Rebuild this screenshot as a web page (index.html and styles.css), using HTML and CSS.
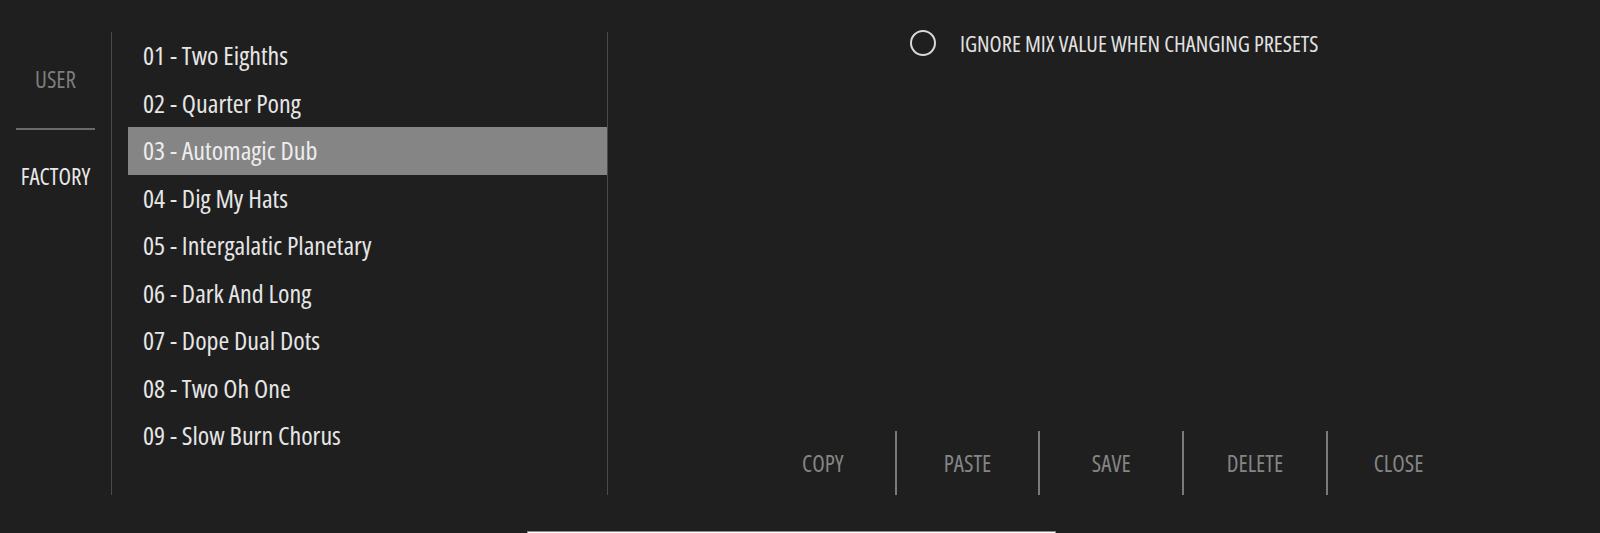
FILE: index.html
```html
<!DOCTYPE html>
<html>
<head>
<meta charset="utf-8">
<link rel="stylesheet" href="styles.css">
</head>
<body>
<div class="app">
  <nav class="sidebar">
    <div class="tab tab-user">USER</div>
    <div class="tab-sep"></div>
    <div class="tab tab-factory">FACTORY</div>
  </nav>
  <ul class="presets">
    <li class="preset">01 - Two Eighths</li>
    <li class="preset">02 - Quarter Pong</li>
    <li class="preset selected">03 - Automagic Dub</li>
    <li class="preset">04 - Dig My Hats</li>
    <li class="preset">05 - Intergalatic Planetary</li>
    <li class="preset">06 - Dark And Long</li>
    <li class="preset">07 - Dope Dual Dots</li>
    <li class="preset">08 - Two Oh One</li>
    <li class="preset">09 - Slow Burn Chorus</li>
  </ul>
  <section class="panel">
    <label class="option">
      <span class="radio"></span>
      <span class="option-text">IGNORE MIX VALUE WHEN CHANGING PRESETS</span>
    </label>
    <div class="actions">
      <div class="action">COPY</div>
      <div class="action">PASTE</div>
      <div class="action">SAVE</div>
      <div class="action">DELETE</div>
      <div class="action">CLOSE</div>
    </div>
  </section>
</div>
<div class="peek"></div>
</body>
</html>
```
FILE: styles.css
```css
html, body {
  margin: 0;
  padding: 0;
  background: #1f1f1f;
  height: 533px;
  overflow: hidden;
}
body {
  font-family: "Open Sans", "Liberation Sans", sans-serif;
  font-stretch: 75%;
  font-weight: 500;
  color: #e4e4e4;
  position: relative;
}
.app {
  display: flex;
  padding-top: 32px;
  height: 463px;
}
.sidebar {
  width: 111px;
  flex: none;
  border-right: 1px solid #4a4a4a;
  display: flex;
  flex-direction: column;
  align-items: center;
}
.tab {
  font-size: 23px;
  line-height: 32px;
  text-align: center;
}
.tab-user {
  color: #7d7d7d;
  margin-top: 31px;
}
.tab-sep {
  width: 79px;
  height: 2px;
  background: #6a6a6a;
  margin-top: 33px;
  align-self: flex-start;
  margin-left: 16px;
}
.tab-factory {
  color: #e8e8e8;
  margin-top: 30px;
}
.presets {
  list-style: none;
  margin: 0;
  padding: 0 0 0 16px;
  width: 479px;
  flex: none;
  border-right: 1px solid #4a4a4a;
}
.preset {
  height: 47.5px;
  line-height: 47.5px;
  padding-left: 15px;
  font-size: 26px;
  white-space: nowrap;
  color: #e6e6e6;
}
.preset.selected {
  background: #858585;
  color: #ededed;
}
.panel {
  flex: 1;
  display: flex;
  flex-direction: column;
  justify-content: space-between;
}
.option {
  display: flex;
  align-items: center;
  margin-left: 302px;
  margin-top: -2px;
  height: 26px;
}
.radio {
  width: 22px;
  height: 22px;
  border: 2px solid #d8d8d8;
  border-radius: 50%;
  flex: none;
}
.option-text {
  margin-left: 24px;
  font-size: 22.3px;
  color: #e2e2e2;
  white-space: nowrap;
}
.actions {
  display: flex;
  margin-left: 143px;
  height: 64px;
}
.action {
  box-sizing: border-box;
  width: 143.7px;
  display: flex;
  align-items: center;
  justify-content: center;
  font-size: 23px;
  color: #858585;
}
.action + .action {
  border-left: 2px solid #7a7a7a;
}
.peek {
  position: absolute;
  left: 527px;
  top: 531px;
  width: 527px;
  height: 2px;
  background: #ffffff;
  border: 1px solid #8a8a8a;
  border-bottom: none;
}
```
